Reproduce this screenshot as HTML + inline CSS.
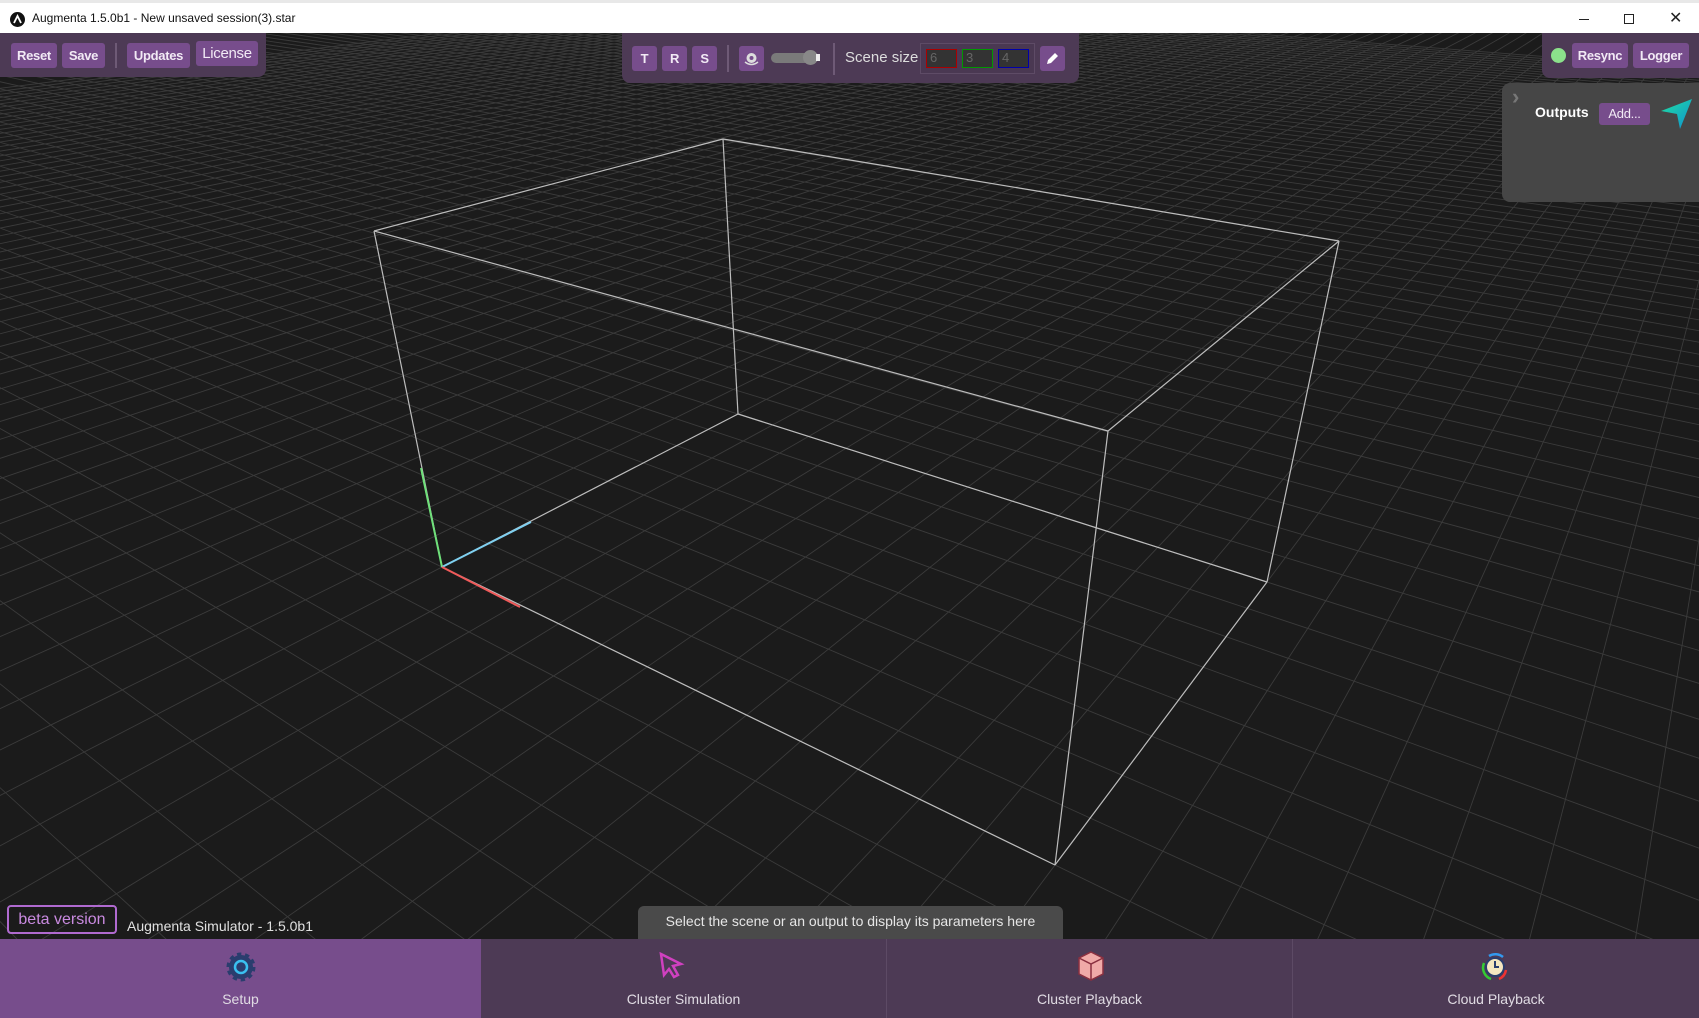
<!DOCTYPE html>
<html><head><meta charset="utf-8">
<style>
*{box-sizing:border-box;margin:0;padding:0}
html,body{width:1699px;height:1018px;overflow:hidden}
body{background:#1b1b1b;font-family:"Liberation Sans",sans-serif;position:relative}
#title{position:absolute;left:0;top:0;width:1699px;height:33px;background:#fff;border-top:3px solid #e8e8e8}
#title .t{position:absolute;left:32px;top:8px;font-size:12px;color:#111}
#title .logo{position:absolute;left:10px;top:9px;width:15px;height:15px;border-radius:50%;background:#111}
.btn{position:absolute;background:#774d8c;color:#f2eaf5;font-size:13px;font-weight:bold;border-radius:3px;text-align:center;line-height:25px;height:25px;letter-spacing:-0.3px}
.panel{position:absolute;background:#4d3a55}
svg{position:absolute;left:0;top:0}
.tab{position:absolute;top:939px;height:79px;background:#4d3a55;color:#e0dbe3;font-size:14px;text-align:center}
.tab .l{position:absolute;left:0;right:0;top:52px}
</style></head><body>
<svg id="g" width="1699" height="1018"></svg>
<div id="title"><div class="logo"><svg width="15" height="15" style="position:absolute"><path d="M4 11 L7.5 4 L11 11" stroke="#fff" stroke-width="1.8" fill="none"/></svg></div><div class="t">Augmenta 1.5.0b1 - New unsaved session(3).star</div>
<div style="position:absolute;left:1579px;top:16px;width:10px;height:1px;background:#222"></div>
<div style="position:absolute;left:1624px;top:11px;width:10px;height:10px;border:1px solid #222"></div>
<div style="position:absolute;left:1669px;top:5px;font-size:16px;color:#222">✕</div>
</div>
<div class="panel" style="left:0;top:33px;width:266px;height:44px;border-radius:0 0 8px 0"></div>
<div class="btn" style="left:11px;top:43px;width:46px">Reset</div>
<div class="btn" style="left:62px;top:43px;width:43px">Save</div>
<div style="position:absolute;left:115px;top:43px;width:2px;height:25px;background:#6e5a76"></div>
<div class="btn" style="left:127px;top:43px;width:63px">Updates</div>
<div class="btn" style="left:196px;top:41px;width:62px;font-weight:normal;font-size:15px">License</div>

<div class="panel" style="left:622px;top:33px;width:457px;height:50px;border-radius:0 0 8px 8px"></div>
<div class="btn" style="left:632px;top:46px;width:25px">T</div>
<div class="btn" style="left:662px;top:46px;width:25px">R</div>
<div class="btn" style="left:692px;top:46px;width:25px">S</div>
<div style="position:absolute;left:727px;top:45px;width:2px;height:27px;background:#6e5a76"></div>
<div class="btn" style="left:739px;top:46px;width:25px"><svg width="25" height="25"><circle cx="12.5" cy="12" r="5" fill="#ddd"/><circle cx="12.5" cy="12" r="2" fill="#774d8c"/><path d="M6 16 Q12.5 21 19 16" stroke="#ddd" fill="none" stroke-width="1.5"/></svg></div>
<div style="position:absolute;left:771px;top:53px;width:45px;height:10px;border-radius:5px;background:#7a7a7a"></div>
<div style="position:absolute;left:803px;top:50px;width:15px;height:15px;border-radius:50%;background:#888"></div>
<div style="position:absolute;left:816px;top:54px;width:4px;height:7px;background:#eee"></div>
<div style="position:absolute;left:833px;top:43px;width:2px;height:32px;background:#6e5a76"></div>
<div style="position:absolute;left:845px;top:49px;color:#ddd;font-size:15px">Scene size</div>
<div style="position:absolute;left:920px;top:43px;width:115px;height:31px;border:1px solid #5e4b66;background:#4a3852"></div>
<div style="position:absolute;left:926px;top:49px;width:31px;height:19px;border:1px solid #a00;background:#333;color:#666;font-size:13px;padding-left:3px">6</div>
<div style="position:absolute;left:962px;top:49px;width:31px;height:19px;border:1px solid #090;background:#333;color:#666;font-size:13px;padding-left:3px">3</div>
<div style="position:absolute;left:998px;top:49px;width:31px;height:19px;border:1px solid #00a;background:#333;color:#666;font-size:13px;padding-left:3px">4</div>
<div class="btn" style="left:1040px;top:46px;width:25px"><svg width="25" height="25"><path d="M7 18 L8 14 L15 7 L18 10 L11 17 Z" fill="#fff"/></svg></div>

<div class="panel" style="left:1542px;top:33px;width:157px;height:45px;border-radius:0 0 0 8px"></div>
<div style="position:absolute;left:1551px;top:48px;width:15px;height:15px;border-radius:50%;background:#8be08b"></div>
<div class="btn" style="left:1572px;top:43px;width:56px">Resync</div>
<div class="btn" style="left:1633px;top:43px;width:56px">Logger</div>

<div style="position:absolute;left:1502px;top:83px;width:205px;height:119px;background:#464646;border-radius:8px"></div>
<div style="position:absolute;left:1512px;top:84px;color:#777;font-size:22px;font-weight:bold">›</div>
<div style="position:absolute;left:1535px;top:104px;color:#fff;font-size:14px;font-weight:bold">Outputs</div>
<div class="btn" style="left:1599px;top:103px;width:51px;height:22px;line-height:22px;font-weight:normal">Add...</div>
<svg style="left:1660px;top:97px" width="34" height="34"><defs><linearGradient id="pg" x1="0" y1="0" x2="1" y2="1"><stop offset="0" stop-color="#20e0a0"/><stop offset="1" stop-color="#1090d0"/></linearGradient></defs><path d="M1 14 L32 2 L20 32 L17 17 Z" fill="url(#pg)"/></svg>

<div style="position:absolute;left:7px;top:905px;width:110px;height:29px;border:2px solid #b06ad0;border-radius:4px;color:#c98ae0;font-size:16px;text-align:center;line-height:25px">beta version</div>
<div style="position:absolute;left:127px;top:918px;color:#e0e0e0;font-size:14px">Augmenta Simulator - 1.5.0b1</div>
<div style="position:absolute;left:638px;top:906px;width:425px;height:33px;background:#4a4a4a;border-radius:6px 6px 0 0;color:#e6e6e6;font-size:14px;text-align:center;line-height:31px">Select the scene or an output to display its parameters here</div>

<div class="tab" style="left:0;width:481px;background:#774d8c"><svg style="left:225px;top:12px" width="32" height="32"><circle cx="16" cy="16" r="12" fill="#2a3d6e" stroke="#2a3d6e" stroke-width="5" stroke-dasharray="4 3.5"/><circle cx="16" cy="16" r="6" fill="none" stroke="#3ac0f0" stroke-width="2.5"/></svg><div class="l">Setup</div></div>
<div class="tab" style="left:481px;width:405px"><svg style="left:175px;top:12px" width="30" height="30"><path d="M5 3 L25 13 L17 15 L22 24 L18 26 L13 18 L8 24 Z" fill="none" stroke="#d040c0" stroke-width="2.5"/></svg><div class="l">Cluster Simulation</div></div>
<div class="tab" style="left:886px;width:406px;border-left:1px solid #5d4a65"><svg style="left:188px;top:10px" width="32" height="34"><path d="M16 3 L28 9 L28 25 L16 31 L4 25 L4 9 Z" fill="#f0aaa8" stroke="#8a3040" stroke-width="1.5"/><path d="M4 9 L16 15 L28 9 M16 15 V31" stroke="#8a3040" stroke-width="1.5" fill="none"/></svg><div class="l">Cluster Playback</div></div>
<div class="tab" style="left:1292px;width:407px;border-left:1px solid #5d4a65"><svg style="left:186px;top:12px" width="32" height="32"><circle cx="16" cy="16" r="9" fill="#f4e6c0" stroke="#2a3d6e" stroke-width="2"/><path d="M16 10 V16 H20" stroke="#2a3d6e" stroke-width="2" fill="none"/><path d="M5 12 A12 12 0 0 0 12 28" stroke="#3c3" stroke-width="2.5" fill="none"/><path d="M27 19 A12 12 0 0 1 20 28" stroke="#e33" stroke-width="2.5" fill="none"/><path d="M10 5 A12 12 0 0 1 24 6" stroke="#39e" stroke-width="2.5" fill="none"/></svg><div class="l">Cloud Playback</div></div>

<script>
var s=document.getElementById('g'),h='';
function L(a,b,c,w){h+='<line x1="'+a[0].toFixed(1)+'" y1="'+a[1].toFixed(1)+'" x2="'+b[0].toFixed(1)+'" y2="'+b[1].toFixed(1)+'" stroke="'+c+'" stroke-width="'+(w||1)+'"/>';}
var A=[723,139],B=[374,231],C=[1339,241],D=[1108,431],E=[738,414],F=[442,567],G=[1267,582],H=[1055,865];
var P=[F,H,G,E];
var dx1=P[1][0]-P[2][0],dx2=P[3][0]-P[2][0],dx3=P[0][0]-P[1][0]+P[2][0]-P[3][0];
var dy1=P[1][1]-P[2][1],dy2=P[3][1]-P[2][1],dy3=P[0][1]-P[1][1]+P[2][1]-P[3][1];
var den=dx1*dy2-dx2*dy1;
var g=(dx3*dy2-dx2*dy3)/den,hh=(dx1*dy3-dx3*dy1)/den;
var a=P[1][0]-P[0][0]+g*P[1][0],b=P[3][0]-P[0][0]+hh*P[3][0],c=P[0][0];
var d=P[1][1]-P[0][1]+g*P[1][1],e=P[3][1]-P[0][1]+hh*P[3][1],f=P[0][1];
function M(u,v){var w=g*u+hh*v+1;return [(a*u+b*v+c)/w,(d*u+e*v+f)/w,w];}
var WMIN=0.2;
function seg(fn,t0,t1){
  var pts=[],N=400;
  for(var k=0;k<=N;k++){var t=t0+(t1-t0)*k/N;var p=fn(t);if(p[2]>WMIN&&Math.abs(p[0])<6000&&Math.abs(p[1])<6000)pts.push(p);}
  if(pts.length>1)L(pts[0],pts[pts.length-1],'#3b3b3b',0.9);
}
for(var i=-60;i<=80;i++){var u=i/12;seg(function(t){return M(u,t)},-20,20);}
for(var j=-60;j<=80;j++){var v=j/8;seg(function(t){return M(t,v)},-20,20);}
var col='#bdbdbd';
[[A,B],[A,C],[B,D],[C,D],[A,E],[B,F],[C,G],[D,H],[E,F],[E,G],[F,H],[G,H]].forEach(function(p){L(p[0],p[1],col,1.2)});
L(F,[421,468],'#6fe07a',2);L(F,[531,522],'#7fd0f0',2);L(F,[520,607],'#f05a5a',2);
s.innerHTML=h;
</script>
</body></html>
